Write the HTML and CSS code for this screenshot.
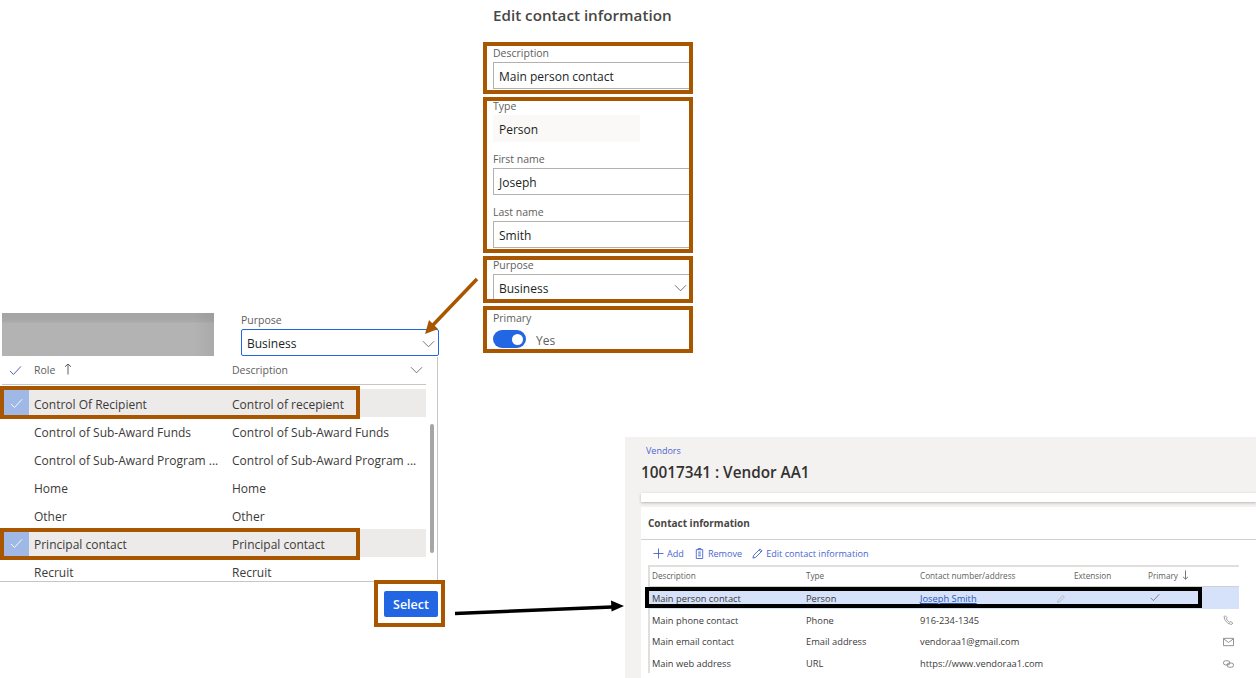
FILE: index.html
```html
<!DOCTYPE html>
<html>
<head>
  <title>Edit contact information</title>
  <link rel="stylesheet" href="styles.css">
</head>
<body>
  <!-- edit form -->
  <section class="edit-panel">
    <h2 class="edit-title">Edit contact information</h2>
    <div class="callout callout-desc">
      <div class="field-label">Description</div>
      <div class="field-input">Main person contact</div>
    </div>
    <div class="callout callout-name">
      <div class="field-label field-tight">Type</div>
      <div class="field-input field-static">Person</div>
      <div class="field-label field-next">First name</div>
      <div class="field-input">Joseph</div>
      <div class="field-label field-next">Last name</div>
      <div class="field-input">Smith</div>
    </div>
    <div class="callout callout-purpose">
      <div class="field-label field-tight">Purpose</div>
      <div class="field-input field-cut">Business
        <svg class="chev chev-form" viewBox="0 0 14 8"><path d="M1 1l6 6 6-6"/></svg>
      </div>
    </div>
    <div class="callout callout-primary">
      <div class="field-label field-primary">Primary</div>
      <div class="toggle-row">
        <span class="toggle"><span class="toggle-dot"></span></span>
        <span class="toggle-text">Yes</span>
      </div>
    </div>
  </section>

  <!-- role lookup -->
  <section class="lookup-panel">
    <div class="lookup-top">
      <div class="gray-shot"></div>
      <div class="purpose-field">
        <div class="field-label">Purpose</div>
        <div class="field-input field-focus">Business
          <svg class="chev chev-focus" viewBox="0 0 14 8"><path d="M1 1l6 6 6-6"/></svg>
        </div>
      </div>
    </div>
    <div class="lookup-list">
      <div class="lookup-head">
        <svg class="head-check" viewBox="0 0 14 12"><path d="M1 6.500l3.800 3.800L13 1.500"/></svg>
        <span class="col-role">Role
          <svg class="sort-up" viewBox="0 0 8 12"><path d="M4 11.500V1M1 3.800L4 1l3 2.800"/></svg>
        </span>
        <span class="col-desc">Description</span>
        <svg class="chev chev-head" viewBox="0 0 14 8"><path d="M1 1l6 6 6-6"/></svg>
      </div>
      <div class="lookup-row row-on">
        <span class="row-check"><svg viewBox="0 0 14 12"><path d="M1 6.500l3.800 3.800L13 1.500"/></svg></span>
        <span class="col-role">Control Of Recipient</span><span class="col-desc">Control of recepient</span>
      </div>
      <div class="lookup-row">
        <span class="row-check"></span>
        <span class="col-role">Control of Sub-Award Funds</span><span class="col-desc">Control of Sub-Award Funds</span>
      </div>
      <div class="lookup-row">
        <span class="row-check"></span>
        <span class="col-role">Control of Sub-Award Program ...</span><span class="col-desc">Control of Sub-Award Program ...</span>
      </div>
      <div class="lookup-row">
        <span class="row-check"></span>
        <span class="col-role">Home</span><span class="col-desc">Home</span>
      </div>
      <div class="lookup-row">
        <span class="row-check"></span>
        <span class="col-role">Other</span><span class="col-desc">Other</span>
      </div>
      <div class="lookup-row row-on">
        <span class="row-check"><svg viewBox="0 0 14 12"><path d="M1 6.500l3.800 3.800L13 1.500"/></svg></span>
        <span class="col-role">Principal contact</span><span class="col-desc">Principal contact</span>
      </div>
      <div class="lookup-row">
        <span class="row-check"></span>
        <span class="col-role">Recruit</span><span class="col-desc">Recruit</span>
      </div>
      <div class="scroll-thumb"></div>
      <div class="mark mark-first"></div>
      <div class="mark mark-second"></div>
    </div>
    <div class="select-box"><button class="select-btn">Select</button></div>
  </section>

  <!-- vendor page -->
  <section class="vendor-panel">
    <a class="crumb">Vendors</a>
    <h1 class="vendor-title">10017341 : Vendor AA1</h1>
    <div class="strip-card"></div>
    <div class="contact-card">
      <div class="card-title">Contact information</div>
      <div class="toolbar">
        <span class="tool">
          <svg class="tool-icon" viewBox="0 0 12 12"><path d="M6 .5v11M.5 6h11"/></svg>Add
        </span>
        <span class="tool">
          <svg class="tool-icon" viewBox="0 0 10 12"><path d="M1.500 1.800h7v9.700h-7zM3.500 1.800V.6h3v1.200M3.500 4.500h3M3.500 6.500h3M3.500 8.500h3"/></svg>Remove
        </span>
        <span class="tool">
          <svg class="tool-icon" viewBox="0 0 12 12"><path d="M1 11l.8-3L8.800 1l2.200 2.200-7 7zM7.700 2.100l2.200 2.200"/></svg>Edit contact information
        </span>
      </div>
      <div class="grid">
        <div class="grid-row grid-head">
          <span>Description</span><span>Type</span><span>Contact number/address</span><span>Extension</span>
          <span>Primary <svg class="sort-down" viewBox="0 0 8 12"><path d="M4 .5V11M1 8.200L4 11l3-2.800"/></svg></span><span></span>
        </div>
        <div class="grid-row grid-on">
          <span>Main person contact</span><span>Person</span>
          <span class="cell-link"><a>Joseph Smith</a>
            <svg class="cell-pen" viewBox="0 0 12 12"><path d="M1 11l.8-3L8.800 1l2.200 2.200-7 7z"/></svg>
          </span>
          <span></span>
          <span><svg class="cell-check" viewBox="0 0 14 12"><path d="M1 6.500l3.800 3.800L13 1.500"/></svg></span><span></span>
        </div>
        <div class="grid-row">
          <span>Main phone contact</span><span>Phone</span><span>916-234-1345</span><span></span><span></span>
          <span><svg class="cell-icon" viewBox="0 0 12 12"><path d="M2 .8L.8 2c0 4.500 4.500 9.200 9.200 9.200l1.200-1.400L8.800 7.800 7.400 8.600C5.800 7.800 4.200 6.200 3.500 4.600l.9-1.400z"/></svg></span>
        </div>
        <div class="grid-row">
          <span>Main email contact</span><span>Email address</span><span>vendoraa1@gmail.com</span><span></span><span></span>
          <span><svg class="cell-icon" viewBox="0 0 12 10"><path d="M.5 1h11v8H.5zM.5 1.500L6 5.500l5.500-4"/></svg></span>
        </div>
        <div class="grid-row">
          <span>Main web address</span><span>URL</span><span>https://www.vendoraa1.com</span><span></span><span></span>
          <span><svg class="cell-icon" viewBox="0 0 12 9"><rect x=".5" y="1" width="7" height="4.500" rx="2.200"/><rect x="4.500" y="3.500" width="7" height="4.500" rx="2.200"/></svg></span>
        </div>
      </div>
    </div>
    <div class="row-mark"></div>
  </section>

  <!-- arrows between the shots -->
  <svg class="arrows" viewBox="0 0 1256 678">
    <path class="arrow-brown" d="M477 279L433 325"/>
    <path class="arrow-brown-head" d="M425 334l4-14 9 9z"/>
    <path class="arrow-black" d="M455 613.500L612 607"/>
    <path class="arrow-black-head" d="M624 606l-13-5.500.5 11z"/>
  </svg>
</body>
</html>
```

FILE: styles.css
```css
* {
  box-sizing: border-box;
}

html, body {
  margin: 0;
  padding: 0;
}

body {
  width: 1256px;
  height: 678px;
  position: relative;
  overflow: hidden;
  background: #fff;
  font-family: "Open Sans", "Noto Sans", sans-serif;
  font-size: 12px;
  color: #323130;
}

svg {
  fill: none;
  stroke: currentColor;
  stroke-width: 1;
}

/* edit form */
.edit-panel {
  position: absolute;
  left: 483px;
  top: 0;
  width: 210px;
}

.edit-title {
  margin: 0;
  height: 42px;
  padding: 5px 0 0 10px;
  font-size: 15.200px;
  line-height: 20px;
  font-weight: 600;
  color: #484644;
  white-space: nowrap;
}

.callout {
  border: 4px solid #a95600;
  padding: 0 0 0 6px;
  margin-bottom: 3px;
  overflow: hidden;
}

.callout-desc {
  height: 52px;
}

.callout-name {
  height: 156px;
}

.callout-purpose {
  height: 47px;
}

.callout-primary {
  height: 47px;
}

.field-label {
  height: 16px;
  font-size: 10.500px;
  line-height: 14px;
  color: #605e5c;
}

.field-tight {
  height: 14px;
  line-height: 10px;
}

.field-next {
  margin-top: 9px;
  height: 17px;
  line-height: 16px;
}

.field-primary {
  line-height: 16px;
}

.field-input {
  height: 27px;
  width: 205px;
  border: 1px solid #b3b0ad;
  padding-left: 5px;
  line-height: 28px;
  color: #201f1e;
  position: relative;
  white-space: nowrap;
}

.field-static {
  width: 147px;
  border: none;
  background: #faf9f8;
  padding-left: 6px;
  line-height: 30px;
}

.field-cut {
  border-bottom: none;
  width: 205px;
}

.field-focus {
  width: 198px;
  border-color: #2266e3;
  border-radius: 2px;
}

.chev {
  position: absolute;
  width: 13px;
  height: 8px;
  color: #6d6b69;
}

.chev-form {
  left: 180px;
  top: 9px;
}

.chev-focus {
  left: 180px;
  top: 10px;
}

.toggle-row {
  display: flex;
  align-items: flex-start;
  gap: 10px;
  margin-top: 4px;
}

.toggle {
  width: 33px;
  height: 18px;
  border-radius: 9px;
  background: #2266e3;
  display: flex;
  align-items: center;
  justify-content: flex-end;
  padding-right: 3px;
}

.toggle-dot {
  width: 11px;
  height: 11px;
  border-radius: 50%;
  background: #fff;
}

.toggle-text {
  color: #605e5c;
  line-height: 22px;
}

/* role lookup */
.lookup-panel {
  position: absolute;
  left: 0;
  top: 313px;
  width: 446px;
  height: 315px;
}

.lookup-top {
  display: flex;
  height: 44px;
}

.gray-shot {
  margin-left: 2px;
  width: 212px;
  height: 43px;
  background:
    linear-gradient(90deg, rgba(0, 0, 0, 0) 90%, rgba(0, 0, 0, 0.05) 100%),
    linear-gradient(#a5a5a5 0, #a5a5a5 4px, #aaa 9px, #b3b3b3 10px, #b3b3b3 100%);
}

.purpose-field {
  margin-left: 27px;
  width: 198px;
}

.purpose-field .field-label {
  height: 16px;
  padding-top: 0;
}

.lookup-list {
  position: relative;
  width: 438px;
  height: 225px;
  border-right: 1px solid #c8c6c4;
  border-bottom: 1px solid #c8c6c4;
  background: #fff;
  overflow: hidden;
}

.lookup-head {
  height: 28px;
  margin-left: 2px;
  width: 424px;
  border-bottom: 1px solid #c8c6c4;
  display: flex;
  align-items: center;
  position: relative;
  font-size: 10.500px;
  color: #605e5c;
}

.lookup-head .col-role,
.lookup-head .col-desc {
  margin-top: -2px;
}

.head-check {
  position: absolute;
  left: 7px;
  top: 8px;
  width: 13px;
  height: 11px;
  color: #3f55a8;
}

.sort-up {
  width: 8px;
  height: 12px;
  margin-left: 6px;
  vertical-align: -1px;
  color: #605e5c;
}

.col-role {
  position: absolute;
  left: 32px;
  white-space: nowrap;
}

.col-desc {
  position: absolute;
  left: 230px;
  white-space: nowrap;
}

.chev-head {
  left: 408px;
  top: 9px;
}

.lookup-row {
  height: 28px;
  margin-left: 2px;
  width: 424px;
  display: flex;
  align-items: center;
  position: relative;
  color: #3b3a39;
}

.lookup-row .col-role,
.lookup-row .col-desc {
  margin-top: 2px;
}

.lookup-head + .lookup-row {
  margin-top: 4px;
}

.row-on {
  background: #edebe9;
}

.row-check {
  margin-left: 2px;
  width: 25px;
  height: 100%;
  display: flex;
  align-items: center;
  justify-content: center;
}

.row-on .row-check {
  background: #9fb8e5;
}

.row-check svg {
  width: 13px;
  height: 11px;
  color: #fff;
}

.scroll-thumb {
  position: absolute;
  left: 430px;
  top: 67px;
  width: 4px;
  height: 129px;
  background: #a6a6a6;
  border-radius: 2px;
}

.mark {
  position: absolute;
  left: 0;
  width: 360px;
  height: 32px;
  border: 4px solid #a95600;
}

.mark-first {
  top: 29px;
  height: 33px;
}

.mark-second {
  top: 171px;
}

.select-box {
  position: absolute;
  left: 374px;
  top: 267px;
  width: 71px;
  height: 47px;
  border: 4px solid #a95600;
  padding: 7px 0 0 6px;
  background: #fff;
}

.select-btn {
  display: block;
  width: 54px;
  height: 26px;
  border: none;
  border-radius: 2px;
  background: #2266e3;
  color: #fff;
  font-family: inherit;
  font-size: 12.500px;
  font-weight: 600;
  padding: 0;
}

/* vendor page */
.vendor-panel {
  position: absolute;
  left: 625px;
  top: 437px;
  width: 631px;
  height: 241px;
  background: #f3f2f1;
  padding: 7px 0 0 16px;
}

.crumb {
  display: block;
  margin-left: 5px;
  font-size: 9px;
  line-height: 14px;
  color: #4a66cf;
}

.vendor-title {
  margin: 2px 0 0;
  font-size: 15.300px;
  line-height: 24px;
  font-weight: 600;
  color: #323130;
  white-space: nowrap;
}

.strip-card {
  margin-top: 9px;
  height: 9px;
  background: #fff;
  box-shadow: 0 1px 3px rgba(0, 0, 0, 0.25);
}

.contact-card {
  margin-top: 5px;
  height: 180px;
  background: #fff;
  padding-left: 7px;
}

.card-title {
  margin-left: -7px;
  padding-left: 7px;
  height: 33px;
  border-bottom: 1px solid #d2d0ce;
  font-size: 10px;
  font-weight: 700;
  line-height: 32px;
  color: #484644;
}

.toolbar {
  height: 25px;
  display: flex;
  align-items: center;
  gap: 10px;
  padding: 2px 0 0 5px;
  font-size: 9.100px;
  color: #4a66cf;
}

.tool {
  display: flex;
  align-items: center;
  gap: 3px;
  white-space: nowrap;
}

.tool-icon {
  width: 11px;
  height: 11px;
  stroke-width: 1;
}

.grid {
  border-top: 2px solid #e1dfdd;
  border-left: 2px solid #e1dfdd;
  margin-right: 17px;
  font-size: 9.300px;
  color: #3b3a39;
}

.grid-row {
  display: grid;
  grid-template-columns: 154px 114px 154px 74px 70px 1fr;
  height: 21.600px;
  padding: 2px 0 0 2px;
  align-items: center;
  white-space: nowrap;
}

.grid-head {
  height: 20px;
  color: #605e5c;
  font-size: 8.200px;
  border-bottom: 1px solid #d2d0ce;
  padding: 0 0 2px 2px;
}

.grid-on {
  background: #d6e2f9;
}

.sort-down {
  width: 7px;
  height: 10px;
  margin-left: 2px;
  vertical-align: -1px;
}

.cell-link {
  position: relative;
}

.cell-link a {
  color: #2a55b8;
  text-decoration: underline;
}

.cell-pen {
  position: absolute;
  left: 137px;
  top: 3px;
  width: 8px;
  height: 8px;
  color: #a8a6a4;
}

.cell-check {
  width: 10px;
  height: 9px;
  margin-left: 2px;
  color: #605e5c;
}

.cell-icon {
  width: 11px;
  height: 10px;
  margin-left: 5px;
  color: #8a8886;
  display: block;
}

.row-mark {
  position: absolute;
  left: 20px;
  top: 150px;
  width: 557px;
  height: 21px;
  border: 4px solid #000;
}

/* arrows */
.arrows {
  position: absolute;
  left: 0;
  top: 0;
  width: 1256px;
  height: 678px;
  pointer-events: none;
}

.arrow-brown {
  stroke: #a95600;
  stroke-width: 3.500;
}

.arrow-brown-head {
  fill: #a95600;
  stroke: none;
}

.arrow-black {
  stroke: #000;
  stroke-width: 3.500;
}

.arrow-black-head {
  fill: #000;
  stroke: none;
}
```
